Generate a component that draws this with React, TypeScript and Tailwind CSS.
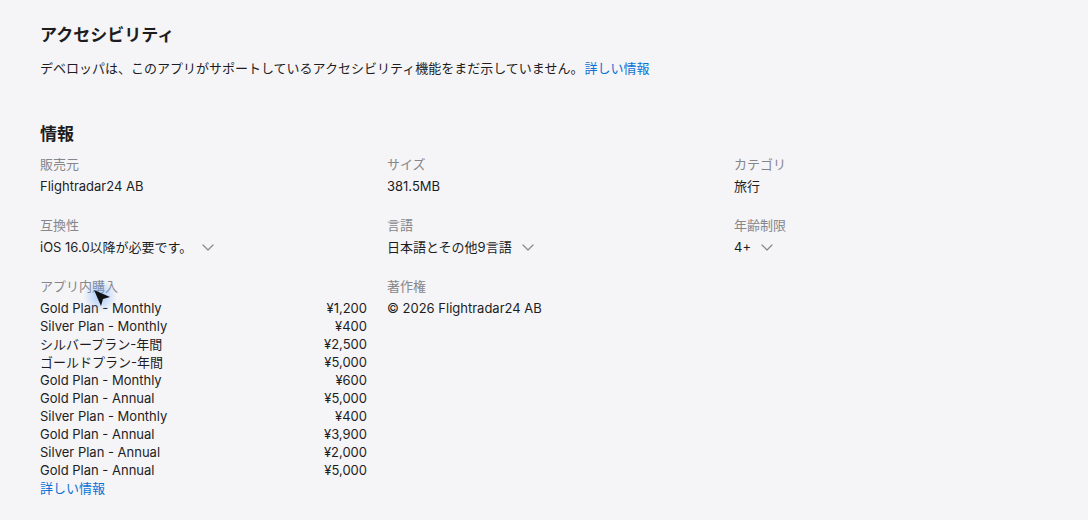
const font = { fontFamily: '"Inter", "Noto Sans CJK JP", sans-serif' };

const purchases: [string, string][] = [
  ["Gold Plan - Monthly", "¥1,200"],
  ["Silver Plan - Monthly", "¥400"],
  ["シルバープラン-年間", "¥2,500"],
  ["ゴールドプラン-年間", "¥5,000"],
  ["Gold Plan - Monthly", "¥600"],
  ["Gold Plan - Annual", "¥5,000"],
  ["Silver Plan - Monthly", "¥400"],
  ["Gold Plan - Annual", "¥3,900"],
  ["Silver Plan - Annual", "¥2,000"],
  ["Gold Plan - Annual", "¥5,000"],
];

function Chevron() {
  return (
    <svg width="12" height="7" viewBox="0 0 12 7" fill="none" stroke="#86868b" strokeWidth="1.2" strokeLinecap="round" strokeLinejoin="round">
      <path d="M1 1 L6 6 L11 1" />
    </svg>
  );
}

function Label({ children }: { children: React.ReactNode }) {
  return <div className="text-[13px] leading-[18px] text-[#86868b]">{children}</div>;
}

function Value({ children, chevron }: { children: React.ReactNode; chevron?: boolean }) {
  return (
    <div className="mt-[4px] flex items-center gap-[10px] text-[13px] leading-[18px] text-[#1d1d1f]">
      <span>{children}</span>
      {chevron && <Chevron />}
    </div>
  );
}

function Cursor() {
  return (
    <svg className="absolute left-[82px] top-[278px] pointer-events-none" width="36" height="36" viewBox="0 0 36 36">
      <defs>
        <radialGradient id="glow" cx="50%" cy="50%" r="50%">
          <stop offset="0%" stopColor="#6aa8ff" stopOpacity="0.55" />
          <stop offset="100%" stopColor="#6aa8ff" stopOpacity="0" />
        </radialGradient>
      </defs>
      <circle cx="18" cy="18" r="17" fill="url(#glow)" />
      <path d="M12 12 L28 19 L21 21 L19 28 Z" fill="#111" />
    </svg>
  );
}

export default function App() {
  return (
    <div className="relative w-[1088px] h-[520px] overflow-hidden bg-[#f5f5f7]" style={font}>
      <div className="pl-[40px] pt-[24px]">
        <h2 className="text-[17px] leading-[22px] font-bold text-[#1d1d1f]">アクセシビリティ</h2>
        <p className="mt-[13px] text-[13px] leading-[18px] text-[#1d1d1f]">
          デベロッパは、このアプリがサポートしているアクセシビリティ機能をまだ示していません。
          <a className="ml-[1px] text-[#0a72d4]">詳しい情報</a>
        </p>

        <h2 className="mt-[46px] text-[17px] leading-[22px] font-bold text-[#1d1d1f]">情報</h2>

        <div className="mt-[10px] grid grid-cols-[327px_327px_327px] gap-x-[20px] gap-y-[21px]">
          <div>
            <Label>販売元</Label>
            <Value>Flightradar24 AB</Value>
          </div>
          <div>
            <Label>サイズ</Label>
            <Value>381.5MB</Value>
          </div>
          <div>
            <Label>カテゴリ</Label>
            <Value>旅行</Value>
          </div>

          <div>
            <Label>互換性</Label>
            <Value chevron>iOS 16.0以降が必要です。</Value>
          </div>
          <div>
            <Label>言語</Label>
            <Value chevron>日本語とその他9言語</Value>
          </div>
          <div>
            <Label>年齢制限</Label>
            <Value chevron>4+</Value>
          </div>

          <div>
            <Label>アプリ内購入</Label>
            <ul className="mt-[4px] text-[13px] leading-[18px] text-[#1d1d1f]">
              {purchases.map(([name, price], i) => (
                <li key={i} className="flex justify-between">
                  <span>{name}</span>
                  <span>{price}</span>
                </li>
              ))}
            </ul>
            <a className="block text-[13px] leading-[18px] text-[#0a72d4]">詳しい情報</a>
          </div>
          <div>
            <Label>著作権</Label>
            <Value>© 2026 Flightradar24 AB</Value>
          </div>
          <div />
        </div>
      </div>
      <Cursor />
    </div>
  );
}
